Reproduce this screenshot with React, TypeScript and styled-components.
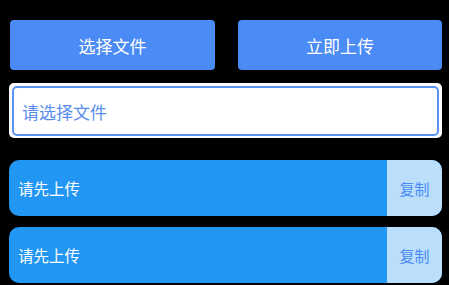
import React from 'react';
import styled, { createGlobalStyle } from 'styled-components';

const GlobalStyle = createGlobalStyle`
  html, body {
    margin: 0;
    padding: 0;
    background: #000;
  }
  body {
    font-family: "Noto Sans CJK SC", "Noto Sans", sans-serif;
  }
`;

const Page = styled.div`
  display: flex;
  flex-direction: column;
  padding: 20px 7px 0 9px;
`;

const ButtonRow = styled.div`
  display: grid;
  grid-template-columns: 205px 204px;
  justify-content: space-between;
  padding-left: 1px;
`;

const ActionButton = styled.button`
  height: 50px;
  border: none;
  border-radius: 4px;
  background: #4b8bf5;
  color: #fff;
  font-family: inherit;
  font-size: 17px;
  cursor: pointer;
`;

const InputFrame = styled.div`
  margin-top: 13px;
  height: 55px;
  box-sizing: border-box;
  padding: 3px 3px 2px 3px;
  background: #fff;
  border-radius: 5px;
`;

const FileInput = styled.input`
  width: 100%;
  height: 100%;
  box-sizing: border-box;
  border: 2px solid #5b93f5;
  border-radius: 5px;
  padding: 0 8px;
  font-family: inherit;
  font-size: 17px;
  color: #333;
  outline: none;

  &::placeholder {
    color: #5a8df0;
  }
`;

const ResultList = styled.div`
  display: flex;
  flex-direction: column;
  gap: 11px;
  margin-top: 22px;
`;

const ResultRow = styled.div`
  display: flex;
  height: 56px;
  border-radius: 10px;
  overflow: hidden;
  background: #2196f3;
`;

const ResultText = styled.div`
  flex: 1;
  display: flex;
  align-items: center;
  padding-left: 9px;
  color: #fff;
  font-size: 15.5px;
`;

const CopyButton = styled.button`
  width: 55px;
  border: none;
  background: #bbdefb;
  color: #4a8af4;
  font-family: inherit;
  font-size: 15px;
  cursor: pointer;
  padding: 0;
`;

export default function App() {
  const results = ['请先上传', '请先上传'];
  return (
    <>
      <GlobalStyle />
      <Page>
        <ButtonRow>
          <ActionButton>选择文件</ActionButton>
          <ActionButton>立即上传</ActionButton>
        </ButtonRow>
        <InputFrame>
          <FileInput placeholder="请选择文件" readOnly />
        </InputFrame>
        <ResultList>
          {results.map((text, i) => (
            <ResultRow key={i}>
              <ResultText>{text}</ResultText>
              <CopyButton>复制</CopyButton>
            </ResultRow>
          ))}
        </ResultList>
      </Page>
    </>
  );
}
